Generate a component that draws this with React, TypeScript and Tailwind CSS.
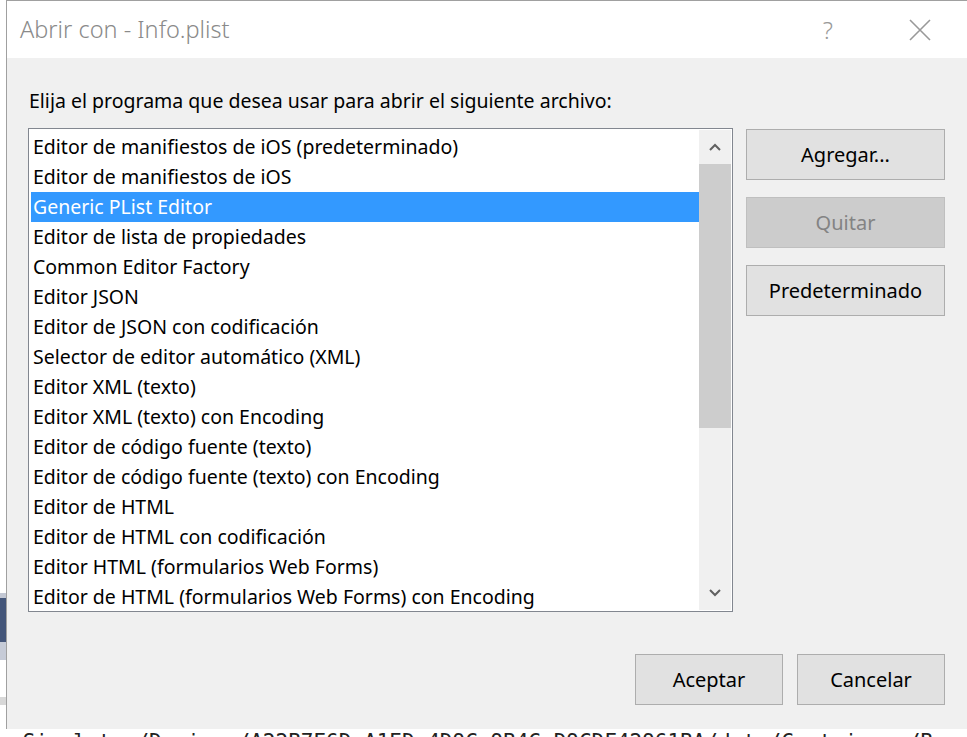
import { useState } from 'react';

const programs = [
    'Editor de manifiestos de iOS (predeterminado)',
    'Editor de manifiestos de iOS',
    'Generic PList Editor',
    'Editor de lista de propiedades',
    'Common Editor Factory',
    'Editor JSON',
    'Editor de JSON con codificación',
    'Selector de editor automático (XML)',
    'Editor XML (texto)',
    'Editor XML (texto) con Encoding',
    'Editor de código fuente (texto)',
    'Editor de código fuente (texto) con Encoding',
    'Editor de HTML',
    'Editor de HTML con codificación',
    'Editor HTML (formularios Web Forms)',
    'Editor de HTML (formularios Web Forms) con Encoding',
];

const font = { fontFamily: '"Noto Sans", "Liberation Sans", sans-serif' };

const Button = ({ label, disabled = false, className = '' }: { label: string; disabled?: boolean; className?: string }) => (
    <button
        disabled={disabled}
        className={
            'flex items-center justify-center border text-[20px] ' +
            (disabled
                ? 'bg-[#cccccc] border-[#bfbfbf] text-[#838383]'
                : 'bg-[#e1e1e1] border-[#adadad] text-black') +
            ' ' + className
        }
    >
        {label}
    </button>
);

export default function App() {
    const [selected, setSelected] = useState(2);

    return (
        <div className="w-[967px] h-[737px] overflow-hidden bg-white flex" style={font}>
            {/* background window peeking out on the left */}
            <div className="w-[6px] flex flex-col shrink-0">
                <div className="h-[593px] bg-white" />
                <div className="h-[5px] bg-[#c3c8d4]" />
                <div className="h-[44px] bg-[#44567a]" />
                <div className="h-[18px] bg-[#c6cbd7]" />
                <div className="h-[37px] bg-white" />
                <div className="h-[8px] bg-[#d8d8d8]" />
                <div className="flex-1 bg-white" />
            </div>

            <div className="flex flex-col w-[961px] shrink-0 min-w-0 overflow-hidden">
                {/* dialog */}
                <div className="h-[730px] border-l border-t border-[#a0a0a0] bg-[#f0f0f0] flex flex-col shrink-0">
                    <div className="h-[57px] bg-white flex items-center pl-[13px] shrink-0">
                        <span className="text-[23.5px] font-light text-[#8a8a8a] flex-1">Abrir con - Info.plist</span>
                        <span className="text-[24px] font-light text-[#999999] mr-[76px]">?</span>
                        <svg width="22" height="22" viewBox="0 0 22 22" className="mr-[36px]">
                            <path d="M1 1 L21 21 M21 1 L1 21" stroke="#999999" strokeWidth="1.6" />
                        </svg>
                    </div>

                    <div className="pl-[22px] pt-[31px] text-[19.5px] text-black leading-[24px] whitespace-nowrap">
                        Elija el programa que desea usar para abrir el siguiente archivo:
                    </div>

                    <div className="flex mt-[15px] pl-[21px]">
                        <div className="w-[705px] h-[484px] border border-[#828790] bg-white flex">
                            <div className="flex-1 pl-[2px] pt-[3px] overflow-hidden">
                                {programs.map((p, i) => (
                                    <div
                                        key={p}
                                        onClick={() => setSelected(i)}
                                        className={
                                            'h-[30px] flex items-center pl-[2px] text-[19.5px] whitespace-nowrap ' +
                                            (i === selected ? 'bg-[#3399ff] text-white' : 'text-black')
                                        }
                                    >
                                        {p}
                                    </div>
                                ))}
                            </div>
                            <div className="w-[32px] bg-[#f0f0f0] flex flex-col mr-[1px] my-[1px]">
                                <div className="h-[34px] flex items-center justify-center">
                                    <svg width="12" height="8" viewBox="0 0 12 8">
                                        <path d="M1 7 L6 2 L11 7" stroke="#606060" strokeWidth="2" fill="none" />
                                    </svg>
                                </div>
                                <div className="h-[264px] bg-[#cdcdcd]" />
                                <div className="flex-1" />
                                <div className="h-[34px] flex items-center justify-center">
                                    <svg width="12" height="8" viewBox="0 0 12 8">
                                        <path d="M1 1 L6 6 L11 1" stroke="#606060" strokeWidth="2" fill="none" />
                                    </svg>
                                </div>
                            </div>
                        </div>

                        <div className="flex flex-col gap-[17px] ml-[13px] pt-[1px]">
                            <Button label="Agregar..." className="w-[199px] h-[51px]" />
                            <Button label="Quitar" disabled className="w-[199px] h-[51px]" />
                            <Button label="Predeterminado" className="w-[199px] h-[51px]" />
                        </div>
                    </div>

                    <div className="flex justify-end gap-[14px] mt-[42px] pr-[22px]">
                        <Button label="Aceptar" className="w-[148px] h-[51px]" />
                        <Button label="Cancelar" className="w-[148px] h-[51px]" />
                    </div>
                </div>

                {/* path text of the window underneath */}
                <div className="flex-1 bg-white text-[21px] leading-[26px] text-[#222] whitespace-nowrap pl-[4px] -mt-[1px] overflow-hidden" style={{ fontFamily: '"DejaVu Sans Mono", monospace' }}>
                    eSimulator/Devices/A22B7E6D-A1ED-4D9C-9B4C-D9CDF42961BA/data/Containers/B
                </div>
            </div>
        </div>
    );
}
